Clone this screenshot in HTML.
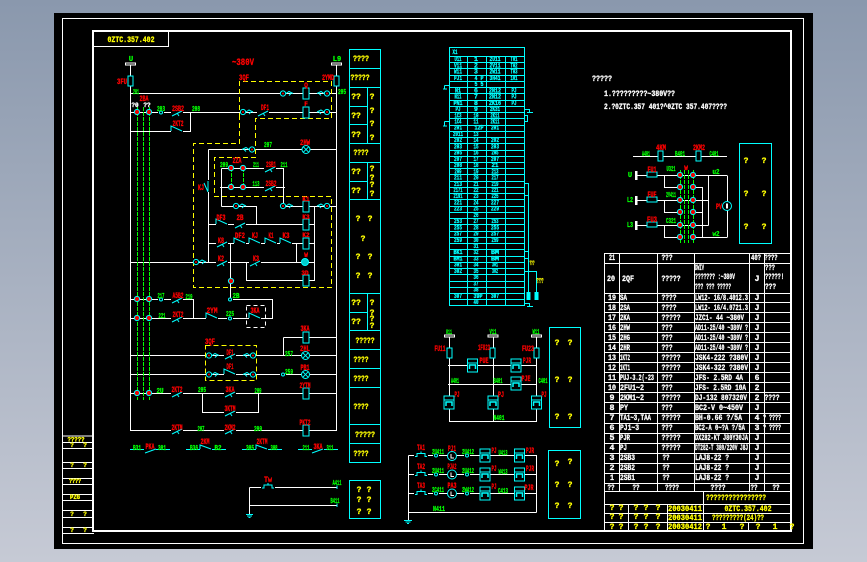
<!DOCTYPE html>
<html><head><meta charset="utf-8"><title>CAD</title>
<style>
html,body{margin:0;padding:0;width:867px;height:562px;overflow:hidden;background:linear-gradient(#8a98ad,#c6cad5)}
svg{position:absolute;left:0;top:0;display:block}
text{font-family:"Liberation Mono",monospace;font-weight:bold;text-anchor:middle;stroke-width:.3px}
.r{fill:#f00;stroke:#f00;font-size:8px}.g{fill:#0f0;stroke:#0f0;font-size:7px}.w{fill:#fff;stroke:#fff;font-size:8px}.y{fill:#ff0;stroke:#ff0;font-size:8px}.c{fill:#0ff;stroke:#0ff;font-size:6.5px}
.s{text-anchor:start}
.L{fill:none;stroke:#fff;stroke-width:1;shape-rendering:crispEdges}
.C{fill:none;stroke:#0ff;stroke-width:1}
.CC{fill:none;stroke:#0ff;stroke-width:1;shape-rendering:crispEdges}
.Y{fill:none;stroke:#ff0;stroke-width:1;stroke-dasharray:5 3;shape-rendering:crispEdges}
.G{fill:none;stroke:#0f0;stroke-width:1;stroke-dasharray:4 1;shape-rendering:crispEdges}
</style></head><body>
<svg width="867" height="562" viewBox="0 0 867 562">
<defs>
<g id="n"><circle r="2.6" fill="#e00" stroke="#0ff"/></g>
<g id="sn"><rect x="-3" y="-1" width="6" height="2" fill="#000"/><circle r="1.5" fill="#000" stroke="#0ff"/></g>
<g id="nc"><rect x="-6" y="-1" width="12" height="2" fill="#000"/><path d="M-5 4L5-1M0 1L2 4" fill="none" stroke="#0ff"/></g>
<g id="no"><rect x="-6" y="-1" width="12" height="2" fill="#000"/><path d="M-6 0V-5L5 0" fill="none" stroke="#0ff"/></g>
<g id="xl"><circle r="2.6" fill="#000" stroke="#0ff"/><circle r="1" fill="#e00"/><path d="M3 0L6-2L10 0M6 2L8 0" fill="none" stroke="#0ff"/></g>
<g id="xr"><circle r="2.6" fill="#000" stroke="#0ff"/><circle r="1" fill="#e00"/><path d="M-3 0L-6-2L-10 0M-6 2L-8 0" fill="none" stroke="#0ff"/></g>
<g id="coil"><rect x="-3" y="-5.5" width="6" height="11" fill="#000" stroke="#0ff"/></g>
<g id="lamp"><circle r="4" fill="#000" stroke="#0ff"/><path d="M-2.8-2.8L2.8 2.8M-2.8 2.8L2.8-2.8" stroke="#0ff"/></g>
<g id="fu"><rect x="-2.5" y="-5" width="5" height="10" fill="#000" stroke="#0ff"/></g>
<g id="tb"><rect x="-5" y="-7" width="10" height="13" fill="#000" stroke="#0ff"/><path d="M-5-3H5" stroke="#0ff"/><path d="M-3 3V-1H3V3" fill="none" stroke="#0ff" stroke-width="1.5"/></g>
<g id="btn"><rect x="-7" y="-1" width="14" height="2" fill="#000"/><path d="M-6 1H-4V-2H4V1H6M0-2V-4" fill="none" stroke="#0ff"/></g>
<g id="mt"><circle r="4.5" fill="#000" stroke="#0ff"/><path d="M-1-2V2H2" fill="none" stroke="#fff"/></g>
<g id="term"><rect x="-5" y="-1" width="10" height="2" fill="#000" stroke="#fff"/></g>
</defs>
<rect x="54" y="13" width="759" height="536" fill="#000"/>

<!-- frame -->
<path class="L" d="M62.5 18.5H803.5V543.5H62.5Z"/>
<path class="L" style="stroke-width:2" d="M93 31H791V531H93Z"/>
<path class="L" d="M93 46.5H168.5V31"/>
<text class="y" x="131" y="42" textLength="47" lengthAdjust="spacingAndGlyphs">0ZTC.357.402</text>
<!-- left strip -->
<path class="L" d="M63 436H93M63 442.5H93M63 448.5H93M63 462.5H93M63 468.5H93M63 478.5H93M63 484.5H93M63 494.5H93M63 500.5H93M63 510.5H93M63 517.5H93M63 527.5H93M63 533.5H94"/>
<text class="y" x="76" y="441.5" textLength="17" lengthAdjust="spacingAndGlyphs" style="font-size:6px">?????</text>
<text class="y" x="72" y="447" style="font-size:6px">?</text><text class="y" x="85" y="447" style="font-size:6px">?</text>
<text class="y" x="72" y="467" style="font-size:6px">?</text><text class="y" x="85" y="467" style="font-size:6px">?</text>
<text class="y" x="75" y="483" textLength="12" lengthAdjust="spacingAndGlyphs" style="font-size:6px">????</text>
<text class="y" x="75" y="499" textLength="10" lengthAdjust="spacingAndGlyphs" style="font-size:6px">PZG</text>
<text class="y" x="72" y="516" style="font-size:6px">?</text><text class="y" x="85" y="516" style="font-size:6px">?</text>
<text class="y" x="72" y="532" style="font-size:6px">?</text><text class="y" x="85" y="532" style="font-size:6px">?</text>

<!-- main schematic wires -->
<path class="L" d="M130.5 64V430.5H336.5V64
M130.5 93.5H336.5M130.5 112.5H336.5M190.5 112.5V131.5H130.5
M208.5 149.5H336.5M208.5 149.5V262M221.5 168.5V206.5M221.5 168.5H283.5V206.5H336.5M220 187.5H285M221.5 206.5H256.5V224
M208.5 224.5H315M314.5 206V280.5H246.5V262
M208.5 243.5H315M230.5 243V299M296.5 243V262M130.5 262.5H315
M130.5 299.5H193.5V318M230.5 299.5H272.5V318.5H130.5
M283.5 337.5H336.5M283.5 337.5V356M130.5 355.5H336.5M130.5 374.5H336.5
M130.5 393.5H336.5M202.5 393.5V412.5H258.5V393.5
M249.5 487.5H337M249.5 505.5H337M249.5 487.5V515"/>
<path class="Y" d="M239.5 118V81.5H331.5V118.5H255.5V157.5H214.5V196.5H331.5V287.5H193.5V143.5H239.5V118"/>
<path class="Y" d="M205.5 345.5H256.5V380.5H205.5Z"/>
<path class="L" style="stroke-dasharray:4 3" d="M246.5 305.5H265.5V327.5H246.5Z"/>
<path class="G" d="M137.5 107V400M143.5 107V400M149.5 107V400M231.5 168V187M243.5 168V187"/>

<use href="#term" x="130.5" y="64"/><use href="#term" x="336.5" y="64"/>
<use href="#fu" x="130.5" y="81"/><use href="#fu" x="336.5" y="81"/>
<use href="#xl" x="283" y="93.5"/><use href="#coil" x="306" y="93.5"/><use href="#xr" x="327" y="93.5"/>
<use href="#n" x="137" y="112"/><use href="#n" x="149" y="112"/><use href="#sn" x="161" y="112.5"/><use href="#nc" x="177" y="112"/><use href="#no" x="177" y="131"/>
<use href="#xl" x="243" y="112"/><use href="#nc" x="263" y="112"/><use href="#coil" x="306" y="112.5"/><use href="#xr" x="327" y="112"/>
<use href="#xr" x="252" y="149.5"/><use href="#lamp" x="306" y="149.5"/>
<rect x="206" y="180" width="5" height="12" fill="#000"/><path class="C" d="M208 181L208 191M204 183L208 192"/>
<use href="#n" x="231" y="168"/><use href="#n" x="243" y="168"/><use href="#nc" x="270" y="168"/>
<use href="#n" x="231" y="187"/><use href="#n" x="243" y="187"/><use href="#nc" x="270" y="187"/>
<use href="#xl" x="236" y="206"/><use href="#xl" x="283" y="206"/><use href="#coil" x="306" y="206.5"/><use href="#xr" x="327" y="206"/>
<use href="#no" x="222" y="224"/><use href="#nc" x="240" y="224"/><use href="#coil" x="306" y="224.5"/>
<use href="#nc" x="222" y="243"/><use href="#no" x="240" y="243"/><use href="#no" x="255" y="243"/><use href="#no" x="271" y="243"/><use href="#no" x="286" y="243"/><use href="#coil" x="306" y="243.5"/>
<use href="#xl" x="196" y="262"/><use href="#nc" x="222" y="262"/><use href="#nc" x="255" y="262"/><circle cx="305" cy="262" r="3.5" fill="#0cc" stroke="#0ff"/>
<use href="#n" x="231" y="281"/><use href="#coil" x="306" y="280.5"/>
<use href="#n" x="137" y="299"/><use href="#n" x="149" y="299"/><use href="#sn" x="161" y="299.5"/><use href="#nc" x="177" y="299"/><use href="#sn" x="230" y="299.5"/>
<use href="#n" x="137" y="318"/><use href="#n" x="149" y="318"/><use href="#nc" x="177" y="318"/><use href="#no" x="212" y="318"/><use href="#sn" x="230" y="318.5"/><use href="#no" x="255" y="318"/>
<use href="#coil" x="306" y="337.5"/>
<use href="#xl" x="209" y="355.5"/><use href="#nc" x="230" y="355"/><use href="#xr" x="253" y="355.5"/><use href="#lamp" x="305.500" y="355.500"/>
<use href="#xl" x="209" y="374.5"/><use href="#no" x="230" y="374"/><use href="#xr" x="253" y="374.5"/><use href="#sn" x="283" y="374.5"/><use href="#lamp" x="305.500" y="374.500"/>
<use href="#n" x="137" y="393"/><use href="#n" x="149" y="393"/><use href="#nc" x="177" y="393"/><use href="#nc" x="230" y="393"/><use href="#coil" x="306" y="393.5"/>
<use href="#nc" x="230" y="412"/>
<use href="#nc" x="177" y="430"/><use href="#nc" x="230" y="430"/><use href="#coil" x="306" y="430.5"/>
<!-- aux row -->
<path class="C" d="M130 449.5H144M156 449.5H170M186 449.5H200M212 449.5H226M242 449.5H256M268 449.5H282M298 449.5H312M324 449.5H338"/>
<path class="C" d="M145 453L156 449M200 449V445L211 449M256 449V445L267 449M312 453L323 449"/>
<use href="#btn" x="268" y="487"/>
<path class="C" d="M246 514.500H253M247 516H252M248.500 517.500H250.500"/>
<path class="C" d="M337 485.500V489M337 503.500V507"/>

<!-- schematic text -->
<text class="g" x="131" y="61">U</text><text class="g" x="337" y="61">L9</text>
<text class="r" x="122" y="84" textLength="10" lengthAdjust="spacingAndGlyphs">3FU</text><text class="r" x="328" y="80" textLength="12" lengthAdjust="spacingAndGlyphs">2YMD</text>
<text x="243" y="65" class="r" style="font-size:10px" textLength="22" lengthAdjust="spacingAndGlyphs">~380V</text>
<text class="r" x="244" y="80" textLength="10" lengthAdjust="spacingAndGlyphs">3QF</text>
<text class="g" x="136" y="94" textLength="6" lengthAdjust="spacingAndGlyphs">201</text><text class="g" x="342" y="94" textLength="8" lengthAdjust="spacingAndGlyphs">205</text>
<text class="r" x="144" y="101" textLength="9" lengthAdjust="spacingAndGlyphs">2BA</text>
<text class="w" x="135" y="107" style="font-size:6px">?0</text><text class="w" x="147" y="107" style="font-size:6px">??</text>
<text class="g" x="161" y="111" textLength="8" lengthAdjust="spacingAndGlyphs">203</text><text class="r" x="178" y="111" textLength="12" lengthAdjust="spacingAndGlyphs">2SB2</text><text class="g" x="196" y="111" textLength="8" lengthAdjust="spacingAndGlyphs">208</text>
<text class="r" x="178" y="126" textLength="11" lengthAdjust="spacingAndGlyphs">2KT2</text>
<text class="r" x="265" y="110" textLength="8" lengthAdjust="spacingAndGlyphs">DF1</text><text class="r" x="306" y="87" style="font-size:6px">Q</text><text class="r" x="306" y="106" style="font-size:6px">F</text>
<text class="g" x="268" y="147" textLength="8" lengthAdjust="spacingAndGlyphs">207</text><text class="r" x="305" y="145" textLength="10" lengthAdjust="spacingAndGlyphs">2HW</text>
<text class="r" x="237" y="163" textLength="9" lengthAdjust="spacingAndGlyphs">2ZA</text><text class="g" x="224" y="167" textLength="8" lengthAdjust="spacingAndGlyphs">209</text><text class="g" x="256" y="167" textLength="6" lengthAdjust="spacingAndGlyphs">211</text><text class="r" x="271" y="167" textLength="10" lengthAdjust="spacingAndGlyphs">2SB1</text><text class="g" x="284" y="167" textLength="7" lengthAdjust="spacingAndGlyphs">211</text>
<text class="g" x="256" y="186" textLength="7" lengthAdjust="spacingAndGlyphs">113</text><text class="r" x="271" y="186" textLength="11" lengthAdjust="spacingAndGlyphs">2SB2</text><text class="r" x="201" y="190" textLength="6" lengthAdjust="spacingAndGlyphs">KJ</text>
<text class="r" x="306" y="201" style="font-size:6px">K1</text><text class="r" x="306" y="219" style="font-size:6px">K3</text><text class="r" x="306" y="237" style="font-size:6px">K2</text><text class="r" x="306" y="257" style="font-size:6px">W</text><text class="r" x="305" y="275" style="font-size:6px">3D</text>
<text class="r" x="221" y="220" textLength="9" lengthAdjust="spacingAndGlyphs">DF3</text><text class="r" x="240" y="220" textLength="7" lengthAdjust="spacingAndGlyphs">2B</text>
<text class="r" x="221" y="243" textLength="6" lengthAdjust="spacingAndGlyphs">K8</text><text class="r" x="240" y="238" textLength="10" lengthAdjust="spacingAndGlyphs">DF2</text><text class="r" x="255" y="238" textLength="6" lengthAdjust="spacingAndGlyphs">KJ</text><text class="r" x="271" y="238" textLength="5" lengthAdjust="spacingAndGlyphs">K1</text><text class="r" x="286" y="238" textLength="7" lengthAdjust="spacingAndGlyphs">K3</text>
<text class="r" x="221" y="261" textLength="6" lengthAdjust="spacingAndGlyphs">K2</text><text class="r" x="256" y="261" textLength="6" lengthAdjust="spacingAndGlyphs">K3</text>
<text class="g" x="161" y="298" textLength="7" lengthAdjust="spacingAndGlyphs">217</text><text class="g" x="189" y="299" textLength="7" lengthAdjust="spacingAndGlyphs">219</text><text class="r" x="178" y="298" textLength="11" lengthAdjust="spacingAndGlyphs">A5B2</text>
<text class="g" x="236" y="298" textLength="7" lengthAdjust="spacingAndGlyphs">2B</text>
<text class="g" x="162" y="318" textLength="7" lengthAdjust="spacingAndGlyphs">221</text><text class="r" x="178" y="317" textLength="11" lengthAdjust="spacingAndGlyphs">2KT2</text><text class="r" x="212" y="313" textLength="11" lengthAdjust="spacingAndGlyphs">2YM</text><text class="g" x="230" y="316" textLength="8" lengthAdjust="spacingAndGlyphs">225</text><text class="r" x="255" y="313" textLength="9" lengthAdjust="spacingAndGlyphs">3KA</text>
<text class="r" x="305" y="331" textLength="9" lengthAdjust="spacingAndGlyphs">3KA</text><text class="r" x="305" y="351" textLength="10" lengthAdjust="spacingAndGlyphs">2HL</text><text class="r" x="305" y="370" textLength="9" lengthAdjust="spacingAndGlyphs">PB1</text>
<text class="r" x="210" y="344" textLength="10" lengthAdjust="spacingAndGlyphs">3QF</text><text class="r" x="230" y="355" textLength="7" lengthAdjust="spacingAndGlyphs">DF1</text><text class="r" x="230" y="369" textLength="7" lengthAdjust="spacingAndGlyphs">DF1</text>
<text class="g" x="289" y="356" textLength="8" lengthAdjust="spacingAndGlyphs">257</text><text class="g" x="289" y="374" textLength="8" lengthAdjust="spacingAndGlyphs">259</text>
<text class="g" x="160" y="393" textLength="7" lengthAdjust="spacingAndGlyphs">2U</text><text class="r" x="177" y="392" textLength="11" lengthAdjust="spacingAndGlyphs">2KT2</text><text class="g" x="202" y="392" textLength="8" lengthAdjust="spacingAndGlyphs">205</text><text class="r" x="230" y="392" textLength="9" lengthAdjust="spacingAndGlyphs">3KA</text><text class="g" x="258" y="393" textLength="7" lengthAdjust="spacingAndGlyphs">209</text><text class="r" x="305" y="388" textLength="11" lengthAdjust="spacingAndGlyphs">2YTM</text>
<text class="r" x="230" y="411" textLength="11" lengthAdjust="spacingAndGlyphs">3KTM</text>
<text class="r" x="177" y="430" textLength="11" lengthAdjust="spacingAndGlyphs">2KTM</text><text class="g" x="201" y="431" textLength="7" lengthAdjust="spacingAndGlyphs">207</text><text class="r" x="230" y="430" textLength="11" lengthAdjust="spacingAndGlyphs">2KM2</text><text class="g" x="258" y="431" textLength="8" lengthAdjust="spacingAndGlyphs">209</text><text class="r" x="305" y="425" textLength="11" lengthAdjust="spacingAndGlyphs">PKT2</text>
<text class="g" x="137" y="450" textLength="8" lengthAdjust="spacingAndGlyphs">B31</text><text class="r" x="150" y="449" textLength="9" lengthAdjust="spacingAndGlyphs">PKA</text><text class="g" x="162" y="450" textLength="8" lengthAdjust="spacingAndGlyphs">301</text>
<text class="g" x="194" y="450" textLength="8" lengthAdjust="spacingAndGlyphs">B36</text><text class="r" x="205" y="444" textLength="9" lengthAdjust="spacingAndGlyphs">2KM</text><text class="g" x="218" y="450" textLength="7" lengthAdjust="spacingAndGlyphs">B2</text>
<text class="g" x="250" y="450" textLength="8" lengthAdjust="spacingAndGlyphs">305</text><text class="r" x="262" y="444" textLength="11" lengthAdjust="spacingAndGlyphs">2KTM</text><text class="g" x="274" y="450" textLength="7" lengthAdjust="spacingAndGlyphs">308</text>
<text class="g" x="306" y="450" textLength="7" lengthAdjust="spacingAndGlyphs">211</text><text class="r" x="318" y="449" textLength="9" lengthAdjust="spacingAndGlyphs">3KA</text><text class="g" x="330" y="450" textLength="7" lengthAdjust="spacingAndGlyphs">311</text>
<text class="r" x="268" y="482" textLength="8" lengthAdjust="spacingAndGlyphs">Tw</text>
<text class="g" x="337" y="485" textLength="9" lengthAdjust="spacingAndGlyphs">A411</text><text class="g" x="335" y="503" textLength="9" lengthAdjust="spacingAndGlyphs">B411</text>

<!-- narrow table -->
<path class="CC" d="M349.500 49.500H380.500V462.500H349.500ZM349.500 68.500H380.500M349.500 87.500H380.500M349.500 106.500H367.500M349.500 124.500H367.500M349.500 143.500H380.500M349.500 162.500H380.500M349.500 181.500H367.500M349.500 199.500H380.500M349.500 293.500H380.500M349.500 312.500H367.500M349.500 330.500H380.500M349.500 349.500H380.500M349.500 368.500H380.500M349.500 387.500H380.500M349.500 424.500H380.500M349.500 443.500H380.500M367.500 87.500V143.500M367.500 162.500V199.500M367.500 293.500V330.500M349.500 480.500H380.500V518.500H349.500Z"/>
<g class="y">
<text class="y" x="361" y="61" textLength="16" lengthAdjust="spacingAndGlyphs">????</text>
<text class="y" x="360" y="80" textLength="19" lengthAdjust="spacingAndGlyphs">?????</text>
<text class="y" x="356" y="99">??</text><text class="y" x="356" y="118">??</text><text class="y" x="356" y="137">??</text>
<text class="y" x="372" y="99">?</text><text class="y" x="372" y="113">?</text><text class="y" x="372" y="126">?</text><text class="y" x="372" y="140">?</text>
<text class="y" x="361" y="155" textLength="15" lengthAdjust="spacingAndGlyphs">????</text>
<text class="y" x="356" y="174">??</text><text class="y" x="356" y="193">??</text>
<text class="y" x="372" y="171">?</text><text class="y" x="372" y="180">?</text><text class="y" x="372" y="187">?</text><text class="y" x="372" y="196">?</text>
<text class="y" x="358" y="221">?</text><text class="y" x="370" y="221">?</text><text class="y" x="363" y="241">?</text><text class="y" x="358" y="259">?</text><text class="y" x="370" y="259">?</text><text class="y" x="358" y="278">?</text><text class="y" x="370" y="278">?</text>
<text class="y" x="356" y="305">??</text><text class="y" x="356" y="324">??</text><text class="y" x="372" y="305">?</text><text class="y" x="372" y="315">?</text><text class="y" x="372" y="321">?</text><text class="y" x="372" y="328">?</text>
<text class="y" x="365" y="343" textLength="19" lengthAdjust="spacingAndGlyphs">?????</text>
<text class="y" x="361" y="362" textLength="15" lengthAdjust="spacingAndGlyphs">????</text>
<text class="y" x="361" y="381" textLength="15" lengthAdjust="spacingAndGlyphs">????</text>
<text class="y" x="361" y="409" textLength="15" lengthAdjust="spacingAndGlyphs">????</text>
<text class="y" x="365" y="437" textLength="20" lengthAdjust="spacingAndGlyphs">?????</text>
<text class="y" x="361" y="456" textLength="15" lengthAdjust="spacingAndGlyphs">????</text>
<text class="y" x="359" y="492">?</text><text class="y" x="369" y="492">?</text><text class="y" x="359" y="502">?</text><text class="y" x="369" y="502">?</text><text class="y" x="359" y="514">?</text><text class="y" x="369" y="514">?</text>
</g>

<!-- terminal table -->
<path class="CC" d="M449.500 47.500H524.500V305.500H449.500ZM467.500 56V305M486.500 56V305M505.500 56V305
M449.500 56.500H524.500M449.500 62.500H524.500M449.500 68.500H524.500M449.500 75.500H524.500M449.500 81.500H524.500M449.500 87.500H524.500M449.500 93.500H524.500M449.500 100.500H524.500M449.500 106.500H524.500M449.500 112.500H524.500M449.500 118.500H524.500M449.500 125.500H524.500M449.500 131.500H524.500M449.500 137.500H524.500M449.500 143.500H524.500M449.500 150.500H524.500M449.500 156.500H524.500M449.500 162.500H524.500M449.500 168.500H524.500M449.500 174.500H524.500M449.500 181.500H524.500M449.500 187.500H524.500M449.500 193.500H524.500M449.500 199.500H524.500M449.500 206.500H524.500M449.500 212.500H524.500M449.500 218.500H524.500M449.500 224.500H524.500M449.500 231.500H524.500M449.500 237.500H524.500M449.500 243.500H524.500M449.500 249.500H524.500M449.500 256.500H524.500M449.500 262.500H524.500M449.500 268.500H524.500M449.500 274.500H524.500M449.500 281.500H524.500M449.500 287.500H524.500M449.500 293.500H524.500M449.500 299.500H524.500
M444.500 85.500H449M444.500 85.500V89M443 89H447M444.500 121.500H449M444.500 121.500V126M443 126H447
M524.500 109.500H529.500V112.500M527 112.500H533M524.500 115.500H527.500V121.500H524.500
M524.500 183.500H528.500V295M524.500 195.500H528.500M524.500 251.500H528.500M524.500 258.500H528.500M524.500 271.500H536.500V295M524.500 303.500H529.500V306.500M527 306.500H533"/>
<path d="M526.500 292h4v8h-4zM534.500 292h4v8h-4z" fill="#0ff"/>
<text class="y" x="532" y="265" style="font-size:6px" textLength="5" lengthAdjust="spacingAndGlyphs">???</text>
<text class="y" x="540" y="283" style="font-size:7px" textLength="7" lengthAdjust="spacingAndGlyphs">????</text>
<text class="c" x="455" y="54" textLength="5" lengthAdjust="spacingAndGlyphs">X1</text>
<g class="c">
<text class="c" x="458" y="61" textLength="7" lengthAdjust="spacingAndGlyphs">U11</text><text class="c" x="476" y="61">1</text><text class="c" x="495" y="61" textLength="11" lengthAdjust="spacingAndGlyphs">2U11</text><text class="c" x="514" y="61" textLength="7" lengthAdjust="spacingAndGlyphs">T01</text>
<text class="c" x="458" y="67.500" textLength="8" lengthAdjust="spacingAndGlyphs">V11</text><text class="c" x="476" y="67.500">2</text><text class="c" x="495" y="67.500" textLength="11" lengthAdjust="spacingAndGlyphs">2V11</text><text class="c" x="514" y="67.500" textLength="7" lengthAdjust="spacingAndGlyphs">T02</text>
<text class="c" x="458" y="73.700" textLength="8" lengthAdjust="spacingAndGlyphs">W11</text><text class="c" x="476" y="73.700">3</text><text class="c" x="495" y="73.700" textLength="11" lengthAdjust="spacingAndGlyphs">2W11</text><text class="c" x="514" y="73.700" textLength="7" lengthAdjust="spacingAndGlyphs">T03</text>
<text class="c" x="458" y="79.900" textLength="8" lengthAdjust="spacingAndGlyphs">PJ1</text><text class="c" x="479" y="79.900" textLength="9" lengthAdjust="spacingAndGlyphs">4 P</text><text class="c" x="495" y="79.900" textLength="11" lengthAdjust="spacingAndGlyphs">3H41</text><text class="c" x="514" y="79.900" textLength="7" lengthAdjust="spacingAndGlyphs">101</text>
<text class="c" x="479" y="86.100" textLength="9" lengthAdjust="spacingAndGlyphs">5 5</text>
<text class="c" x="458" y="92.400" textLength="6" lengthAdjust="spacingAndGlyphs">N1</text><text class="c" x="476" y="92.400">6</text><text class="c" x="495" y="92.400" textLength="12" lengthAdjust="spacingAndGlyphs">2N12</text><text class="c" x="514" y="92.400" textLength="5" lengthAdjust="spacingAndGlyphs">PJ</text>
<text class="c" x="458" y="98.600" textLength="7" lengthAdjust="spacingAndGlyphs">N11</text><text class="c" x="476" y="98.600">7</text><text class="c" x="495" y="98.600" textLength="12" lengthAdjust="spacingAndGlyphs">2N12</text><text class="c" x="514" y="98.600" textLength="5" lengthAdjust="spacingAndGlyphs">PJ</text>
<text class="c" x="458" y="104.800" textLength="9" lengthAdjust="spacingAndGlyphs">PN1</text><text class="c" x="476" y="104.800">8</text><text class="c" x="495" y="104.800" textLength="12" lengthAdjust="spacingAndGlyphs">2K16</text><text class="c" x="514" y="104.800" textLength="5" lengthAdjust="spacingAndGlyphs">PJ</text>
<text class="c" x="458" y="111" textLength="5" lengthAdjust="spacingAndGlyphs">PJ</text><text class="c" x="476" y="111">9</text><text class="c" x="495" y="111" textLength="10" lengthAdjust="spacingAndGlyphs">2K31</text>
<text class="c" x="458" y="117.300" textLength="7" lengthAdjust="spacingAndGlyphs">1C3</text><text class="c" x="476" y="117.300" textLength="5" lengthAdjust="spacingAndGlyphs">10</text><text class="c" x="495" y="117.300" textLength="9" lengthAdjust="spacingAndGlyphs">2K11</text>
<text class="c" x="458" y="123.500" textLength="7" lengthAdjust="spacingAndGlyphs">1C4</text><text class="c" x="476" y="123.500" textLength="5" lengthAdjust="spacingAndGlyphs">11</text><text class="c" x="495" y="123.500" textLength="9" lengthAdjust="spacingAndGlyphs">2K11</text>
<text class="c" x="458" y="129.700" textLength="8" lengthAdjust="spacingAndGlyphs">201</text><text class="c" x="479" y="129.700" textLength="9" lengthAdjust="spacingAndGlyphs">12P</text><text class="c" x="495" y="129.700" textLength="8" lengthAdjust="spacingAndGlyphs">201</text>
<text class="c" x="458" y="136" textLength="10" lengthAdjust="spacingAndGlyphs">2011</text><text class="c" x="476" y="136" textLength="5" lengthAdjust="spacingAndGlyphs">13</text>
<text class="c" x="458" y="142.200" textLength="8" lengthAdjust="spacingAndGlyphs">202</text><text class="c" x="476" y="142.200" textLength="5" lengthAdjust="spacingAndGlyphs">14</text><text class="c" x="495" y="142.200" textLength="8" lengthAdjust="spacingAndGlyphs">202</text>
<text class="c" x="458" y="148.400" textLength="8" lengthAdjust="spacingAndGlyphs">203</text><text class="c" x="476" y="148.400" textLength="5" lengthAdjust="spacingAndGlyphs">15</text><text class="c" x="495" y="148.400" textLength="8" lengthAdjust="spacingAndGlyphs">203</text>
<text class="c" x="458" y="154.600" textLength="8" lengthAdjust="spacingAndGlyphs">205</text><text class="c" x="476" y="154.600" textLength="5" lengthAdjust="spacingAndGlyphs">16</text><text class="c" x="495" y="154.600" textLength="7" lengthAdjust="spacingAndGlyphs">205</text>
<text class="c" x="458" y="160.900" textLength="8" lengthAdjust="spacingAndGlyphs">207</text><text class="c" x="476" y="160.900" textLength="5" lengthAdjust="spacingAndGlyphs">17</text><text class="c" x="495" y="160.900" textLength="8" lengthAdjust="spacingAndGlyphs">207</text>
<text class="c" x="458" y="167.100" textLength="8" lengthAdjust="spacingAndGlyphs">208</text><text class="c" x="476" y="167.100" textLength="5" lengthAdjust="spacingAndGlyphs">18</text><text class="c" x="495" y="167.100" textLength="7" lengthAdjust="spacingAndGlyphs">21</text>
<text class="c" x="458" y="173.300" textLength="7" lengthAdjust="spacingAndGlyphs">209</text><text class="c" x="476" y="173.300" textLength="5" lengthAdjust="spacingAndGlyphs">19</text><text class="c" x="495" y="173.300" textLength="7" lengthAdjust="spacingAndGlyphs">213</text>
<text class="c" x="458" y="179.500" textLength="8" lengthAdjust="spacingAndGlyphs">211</text><text class="c" x="476" y="179.500" textLength="5" lengthAdjust="spacingAndGlyphs">20</text><text class="c" x="495" y="179.500" textLength="7" lengthAdjust="spacingAndGlyphs">217</text>
<text class="c" x="458" y="185.800" textLength="8" lengthAdjust="spacingAndGlyphs">213</text><text class="c" x="476" y="185.800" textLength="5" lengthAdjust="spacingAndGlyphs">21</text><text class="c" x="495" y="185.800" textLength="7" lengthAdjust="spacingAndGlyphs">219</text>
<text class="c" x="458" y="192" textLength="9" lengthAdjust="spacingAndGlyphs">2171</text><text class="c" x="476" y="192" textLength="5" lengthAdjust="spacingAndGlyphs">22</text><text class="c" x="495" y="192" textLength="7" lengthAdjust="spacingAndGlyphs">221</text>
<text class="c" x="458" y="198.200" textLength="9" lengthAdjust="spacingAndGlyphs">2191</text><text class="c" x="476" y="198.200" textLength="5" lengthAdjust="spacingAndGlyphs">23</text><text class="c" x="495" y="198.200" textLength="7" lengthAdjust="spacingAndGlyphs">225</text>
<text class="c" x="458" y="204.400" textLength="8" lengthAdjust="spacingAndGlyphs">221</text><text class="c" x="476" y="204.400" textLength="5" lengthAdjust="spacingAndGlyphs">24</text><text class="c" x="495" y="204.400" textLength="8" lengthAdjust="spacingAndGlyphs">227</text>
<text class="c" x="458" y="210.700" textLength="8" lengthAdjust="spacingAndGlyphs">223</text><text class="c" x="476" y="210.700" textLength="5" lengthAdjust="spacingAndGlyphs">25</text><text class="c" x="495" y="210.700" textLength="8" lengthAdjust="spacingAndGlyphs">229</text>
<text class="c" x="476" y="216.900" textLength="5" lengthAdjust="spacingAndGlyphs">26</text>
<text class="c" x="458" y="223.100" textLength="8" lengthAdjust="spacingAndGlyphs">253</text><text class="c" x="476" y="223.100" textLength="5" lengthAdjust="spacingAndGlyphs">27</text><text class="c" x="495" y="223.100" textLength="7" lengthAdjust="spacingAndGlyphs">253</text>
<text class="c" x="458" y="229.300" textLength="8" lengthAdjust="spacingAndGlyphs">255</text><text class="c" x="476" y="229.300" textLength="5" lengthAdjust="spacingAndGlyphs">28</text><text class="c" x="495" y="229.300" textLength="8" lengthAdjust="spacingAndGlyphs">255</text>
<text class="c" x="458" y="235.600" textLength="8" lengthAdjust="spacingAndGlyphs">257</text><text class="c" x="476" y="235.600" textLength="5" lengthAdjust="spacingAndGlyphs">29</text><text class="c" x="495" y="235.600" textLength="8" lengthAdjust="spacingAndGlyphs">257</text>
<text class="c" x="458" y="241.800" textLength="8" lengthAdjust="spacingAndGlyphs">259</text><text class="c" x="476" y="241.800" textLength="5" lengthAdjust="spacingAndGlyphs">30</text><text class="c" x="495" y="241.800" textLength="7" lengthAdjust="spacingAndGlyphs">259</text>
<text class="c" x="476" y="248" textLength="5" lengthAdjust="spacingAndGlyphs">31</text>
<text class="c" x="458" y="254.200" textLength="9" lengthAdjust="spacingAndGlyphs">BK1</text><text class="c" x="476" y="254.200" textLength="5" lengthAdjust="spacingAndGlyphs">32</text><text class="c" x="495" y="254.200" textLength="8" lengthAdjust="spacingAndGlyphs">BM</text>
<text class="c" x="458" y="260.500" textLength="9" lengthAdjust="spacingAndGlyphs">BM1</text><text class="c" x="476" y="260.500" textLength="5" lengthAdjust="spacingAndGlyphs">33</text><text class="c" x="495" y="260.500" textLength="8" lengthAdjust="spacingAndGlyphs">BM</text>
<text class="c" x="458" y="266.700" textLength="8" lengthAdjust="spacingAndGlyphs">301</text><text class="c" x="476" y="266.700" textLength="5" lengthAdjust="spacingAndGlyphs">34</text><text class="c" x="495" y="266.700" textLength="6" lengthAdjust="spacingAndGlyphs">301</text>
<text class="c" x="458" y="272.900" textLength="8" lengthAdjust="spacingAndGlyphs">302</text><text class="c" x="476" y="272.900" textLength="5" lengthAdjust="spacingAndGlyphs">35</text><text class="c" x="495" y="272.900" textLength="6" lengthAdjust="spacingAndGlyphs">302</text>
<text class="c" x="476" y="279.100" textLength="5" lengthAdjust="spacingAndGlyphs">36</text><text class="c" x="476" y="285.400" textLength="5" lengthAdjust="spacingAndGlyphs">37</text><text class="c" x="476" y="291.600" textLength="5" lengthAdjust="spacingAndGlyphs">38</text>
<text class="c" x="458" y="297.800" textLength="8" lengthAdjust="spacingAndGlyphs">307</text><text class="c" x="478" y="297.800" textLength="9" lengthAdjust="spacingAndGlyphs">39P</text><text class="c" x="495" y="297.800" textLength="8" lengthAdjust="spacingAndGlyphs">307</text>
<text class="c" x="476" y="304" textLength="5" lengthAdjust="spacingAndGlyphs">40</text>
</g>

<!-- lower centre circuits -->
<path class="L" d="M449.500 336V421.500H536.500V336M493.500 336V421.500M448 365.500H536.500M448 384.500H536.500"/>
<use href="#term" x="449.500" y="336"/><use href="#term" x="493" y="336"/><use href="#term" x="536.500" y="336"/>
<use href="#fu" x="449.500" y="353"/><use href="#fu" x="492.500" y="353"/><use href="#fu" x="536.500" y="353"/>
<use href="#tb" x="472.500" y="366"/><use href="#tb" x="516" y="366"/><use href="#tb" x="516" y="384"/>
<use href="#tb" x="449" y="403"/><use href="#tb" x="493" y="403"/><use href="#tb" x="536.500" y="403"/>
<text class="g" x="449" y="334" style="font-size:6.500px" textLength="6" lengthAdjust="spacingAndGlyphs">U11</text><text class="g" x="493" y="334" textLength="7" lengthAdjust="spacingAndGlyphs">V11</text><text class="g" x="536" y="334" textLength="7" lengthAdjust="spacingAndGlyphs">W11</text>
<text class="r" x="440" y="351" textLength="11" lengthAdjust="spacingAndGlyphs">FU11</text><text class="r" x="484" y="350" textLength="12" lengthAdjust="spacingAndGlyphs">1FU23</text><text class="r" x="528" y="351" textLength="12" lengthAdjust="spacingAndGlyphs">FU23</text>
<text class="r" x="484" y="363" textLength="9" lengthAdjust="spacingAndGlyphs">PUE</text><text class="r" x="527" y="363" textLength="8" lengthAdjust="spacingAndGlyphs">PJR</text><text class="r" x="526" y="381" textLength="9" lengthAdjust="spacingAndGlyphs">PJE</text>
<text class="g" x="455" y="383" textLength="8" lengthAdjust="spacingAndGlyphs">A401</text><text class="g" x="498" y="383" textLength="9" lengthAdjust="spacingAndGlyphs">B401</text><text class="g" x="543" y="383" textLength="9" lengthAdjust="spacingAndGlyphs">C401</text>
<text class="r" x="457" y="397" textLength="5" lengthAdjust="spacingAndGlyphs">PJ</text><text class="r" x="501" y="397" textLength="6" lengthAdjust="spacingAndGlyphs">PJ</text><text class="r" x="544" y="397" textLength="5" lengthAdjust="spacingAndGlyphs">PJ</text>
<text class="g" x="499" y="420" textLength="11" lengthAdjust="spacingAndGlyphs">N401</text>
<path class="CC" d="M549.500 327.500H580.500V427.500H549.500Z"/>
<text class="y" x="557" y="345">?</text><text class="y" x="570" y="345">?</text><text class="y" x="557" y="382">?</text><text class="y" x="570" y="382">?</text><text class="y" x="557" y="419">?</text><text class="y" x="570" y="419">?</text>

<path class="L" d="M408.500 455.500V520M408.500 455.500H536.500V512.500M408.500 474.500H536.500M408.500 493.500H536.500M408.500 512.500H536.500"/>
<use href="#btn" x="421" y="455.500"/><use href="#btn" x="421" y="474.500"/><use href="#btn" x="421" y="493.500"/>
<use href="#sn" x="436" y="455.500"/><use href="#sn" x="436" y="474.500"/><use href="#sn" x="436" y="493.500"/>
<use href="#mt" x="452" y="456"/><use href="#mt" x="452" y="474.500"/><use href="#mt" x="452" y="493.500"/>
<use href="#sn" x="467" y="455.500"/><use href="#sn" x="467" y="474.500"/><use href="#sn" x="467" y="493.500"/>
<use href="#tb" x="485" y="456"/><use href="#tb" x="485" y="475"/><use href="#tb" x="485" y="494"/>
<use href="#tb" x="519.500" y="456"/><use href="#tb" x="519.500" y="475"/><use href="#tb" x="519.500" y="494"/>
<path class="C" d="M404 520.500H412M405.500 522H410.500M407 523.500H409"/>
<text class="r" x="421" y="450" textLength="8" lengthAdjust="spacingAndGlyphs">TA1</text><text class="r" x="421" y="469" textLength="8" lengthAdjust="spacingAndGlyphs">TA2</text><text class="r" x="421" y="488" textLength="8" lengthAdjust="spacingAndGlyphs">TA3</text>
<text class="g" x="438" y="454" textLength="12" lengthAdjust="spacingAndGlyphs">2U411</text><text class="g" x="438" y="473" textLength="12" lengthAdjust="spacingAndGlyphs">2U411</text><text class="g" x="438" y="492" textLength="12" lengthAdjust="spacingAndGlyphs">2C411</text>
<text class="r" x="452" y="451" textLength="8" lengthAdjust="spacingAndGlyphs">PJ1</text><text class="r" x="452" y="469" textLength="9" lengthAdjust="spacingAndGlyphs">PJA2</text><text class="r" x="452" y="488" textLength="9" lengthAdjust="spacingAndGlyphs">PA3</text>
<text class="g" x="468" y="454" textLength="12" lengthAdjust="spacingAndGlyphs">2U412</text><text class="g" x="468" y="473" textLength="12" lengthAdjust="spacingAndGlyphs">2U412</text><text class="g" x="468" y="492" textLength="12" lengthAdjust="spacingAndGlyphs">2W412</text>
<text class="r" x="494" y="453" textLength="5" lengthAdjust="spacingAndGlyphs">PJ</text><text class="r" x="494" y="471" textLength="5" lengthAdjust="spacingAndGlyphs">PJ</text><text class="r" x="494" y="489" textLength="5" lengthAdjust="spacingAndGlyphs">PJ</text>
<text class="g" x="503" y="455" textLength="9" lengthAdjust="spacingAndGlyphs">U413</text><text class="g" x="503" y="474" textLength="9" lengthAdjust="spacingAndGlyphs">W413</text><text class="g" x="503" y="493" textLength="10" lengthAdjust="spacingAndGlyphs">C413</text>
<text class="r" x="530" y="453" textLength="8" lengthAdjust="spacingAndGlyphs">PJR</text><text class="r" x="530" y="471" textLength="8" lengthAdjust="spacingAndGlyphs">PJR</text><text class="r" x="529" y="490" textLength="9" lengthAdjust="spacingAndGlyphs">PJR</text>
<text class="g" x="439" y="511" textLength="12" lengthAdjust="spacingAndGlyphs">N411</text>
<path class="CC" d="M548.500 450.500H580.500V518.500H548.500Z"/>
<text class="y" x="557" y="466">?</text><text class="y" x="570" y="464">?</text><text class="y" x="557" y="487">?</text><text class="y" x="570" y="487">?</text><text class="y" x="557" y="508">?</text><text class="y" x="570" y="508">?</text>

<!-- notes -->
<text class="w s" x="592" y="81" textLength="20" lengthAdjust="spacingAndGlyphs">?????</text>
<text class="w s" x="604" y="96" textLength="71" lengthAdjust="spacingAndGlyphs">1.?????????~380V??</text>
<text class="w s" x="604" y="109" textLength="123" lengthAdjust="spacingAndGlyphs">2.?0ZTC.357 401?^0ZTC 357.407????</text>

<!-- three phase -->
<path class="L" d="M633 156.500H727M635 175.500H727M635 200.500H708.500M635 225.500H708.500M664.500 175.500V187.500H680M664.500 200.500V212.500H680M664.500 225.500V237.500H680M708.500 175.500V225.500M693 187.500H702.500V237.500M693 212.500H702.500M693 237.500H727M727.500 175.500V237.500"/>
<path class="G" d="M680.500 170V243M684.500 170V243M688.500 170V243M693.500 170V243"/>
<path d="M635 171h2.500v9h-2.500zM635 196h2.500v9h-2.500zM635 221h2.500v9h-2.500z" fill="#fff"/>
<rect x="658" y="151" width="5" height="10" fill="#000" stroke="#0ff"/><rect x="696" y="151" width="5" height="10" fill="#000" stroke="#0ff"/>
<rect x="647" y="172" width="10" height="5" fill="#000" stroke="#0ff"/><rect x="647" y="197" width="10" height="5" fill="#000" stroke="#0ff"/><rect x="647" y="222" width="10" height="5" fill="#000" stroke="#0ff"/>
<use href="#n" x="680" y="175"/><use href="#n" x="680" y="187"/><use href="#n" x="680" y="200"/><use href="#n" x="680" y="212"/><use href="#n" x="680" y="225"/><use href="#n" x="680" y="237"/>
<use href="#n" x="693" y="175"/><use href="#n" x="693" y="187"/><use href="#n" x="693" y="200"/><use href="#n" x="693" y="212"/><use href="#n" x="693" y="225"/><use href="#n" x="693" y="237"/>
<circle cx="727" cy="206" r="4.500" fill="#000" stroke="#0ff"/><rect x="726" y="203.500" width="2" height="5" fill="#fff"/>
<text class="r" x="661" y="150" textLength="10" lengthAdjust="spacingAndGlyphs">4KM</text><text class="r" x="699" y="150" textLength="12" lengthAdjust="spacingAndGlyphs">2KM2</text>
<text class="g" x="646" y="156" textLength="8" lengthAdjust="spacingAndGlyphs">A401</text><text class="g" x="680" y="156" textLength="10" lengthAdjust="spacingAndGlyphs">B401</text><text class="g" x="714" y="156" textLength="9" lengthAdjust="spacingAndGlyphs">C401</text>
<text class="g" x="630" y="177" textLength="4" lengthAdjust="spacingAndGlyphs">U</text><text class="g" x="630" y="202" textLength="6" lengthAdjust="spacingAndGlyphs">L2</text><text class="g" x="630" y="227" textLength="6" lengthAdjust="spacingAndGlyphs">L3</text>
<text class="r" x="652" y="172" textLength="9" lengthAdjust="spacingAndGlyphs">FU1</text><text class="r" x="652" y="197" textLength="9" lengthAdjust="spacingAndGlyphs">FUF</text><text class="r" x="652" y="222" textLength="10" lengthAdjust="spacingAndGlyphs">FU3</text>
<text class="g" x="671" y="171" textLength="9" lengthAdjust="spacingAndGlyphs">U321</text><text class="g" x="671" y="197" textLength="10" lengthAdjust="spacingAndGlyphs">2V411</text><text class="g" x="671" y="223" textLength="10" lengthAdjust="spacingAndGlyphs">C321</text>
<text class="r" x="686" y="170" style="font-size:6px">W</text><text class="g" x="716" y="174" textLength="7" lengthAdjust="spacingAndGlyphs">u2</text><text class="g" x="716" y="236" textLength="7" lengthAdjust="spacingAndGlyphs">w2</text><text class="r" x="719" y="209" textLength="6" lengthAdjust="spacingAndGlyphs">PV</text>
<path class="CC" d="M739.500 143.500H771.500V243.500H739.500Z"/>
<text class="y" x="746" y="163">?</text><text class="y" x="764" y="163">?</text><text class="y" x="746" y="196">?</text><text class="y" x="764" y="196">?</text><text class="y" x="746" y="229">?</text><text class="y" x="764" y="229">?</text>

<!-- BOM -->
<path class="L" d="M604.500 253.500H790M604.500 263.500H790M604.500 293.500H790M604.500 302.500H790M604.500 312.500H790M604.500 322.500H790M604.500 332.500H790M604.500 342.500H790M604.500 352.500H790M604.500 362.500H790M604.500 372.500H790M604.500 382.500H790M604.500 392.500H790M604.500 402.500H790M604.500 413.500H790M604.500 423.500H790M604.500 433.500H790M604.500 443.500H790M604.500 453.500H790M604.500 463.500H790M604.500 473.500H790M604.500 483.500H790M604.500 491.500H790M604.500 504.500H790M604.500 513.500H790M604.500 522.500H790
M604.500 253V531M619.500 253V492M657.500 253V492M694.500 253V492M749.500 253V492M764.500 253V492
M703.500 492V531M628.500 504V531M667.500 504V531M748.500 522V531"/>
<g>
<text class="w" x="612" y="260" textLength="6" lengthAdjust="spacingAndGlyphs">21</text><text class="w" x="667" y="260" textLength="11" lengthAdjust="spacingAndGlyphs">???</text><text class="w" x="756" y="260" textLength="10" lengthAdjust="spacingAndGlyphs">40?</text><text class="w" x="771" y="260" textLength="13" lengthAdjust="spacingAndGlyphs">????</text>
<text class="w" x="611" y="281" textLength="8" lengthAdjust="spacingAndGlyphs">20</text><text class="w" x="628" y="281" textLength="12" lengthAdjust="spacingAndGlyphs">2QF</text><text class="w" x="671" y="281" textLength="19" lengthAdjust="spacingAndGlyphs">?????</text>
<text class="w s" x="695" y="270" textLength="9" lengthAdjust="spacingAndGlyphs">DWIV</text><text class="w s" x="695" y="279" textLength="40" lengthAdjust="spacingAndGlyphs">??????? :~380V</text><text class="w s" x="695" y="289" textLength="36" lengthAdjust="spacingAndGlyphs">??? ??? ?????</text>
<text class="w" x="757" y="281">J</text><text class="w s" x="765" y="270" textLength="10" lengthAdjust="spacingAndGlyphs">???</text><text class="w s" x="765" y="279" textLength="19" lengthAdjust="spacingAndGlyphs">?????!</text><text class="w s" x="765" y="289" textLength="11" lengthAdjust="spacingAndGlyphs">???</text>

<text class="w" x="612" y="300" textLength="8" lengthAdjust="spacingAndGlyphs">19</text><text class="w s" x="620" y="300" textLength="7" lengthAdjust="spacingAndGlyphs">SA</text><text class="w" x="669" y="300" textLength="15" lengthAdjust="spacingAndGlyphs">????</text><text class="w s" x="695" y="300" textLength="53" lengthAdjust="spacingAndGlyphs">LW12- 16/8.4012.3</text><text class="w" x="757" y="300">J</text>
<text class="w" x="612" y="310" textLength="8" lengthAdjust="spacingAndGlyphs">18</text><text class="w s" x="620" y="310" textLength="10" lengthAdjust="spacingAndGlyphs">2SA</text><text class="w" x="669" y="310" textLength="15" lengthAdjust="spacingAndGlyphs">????</text><text class="w s" x="695" y="310" textLength="53" lengthAdjust="spacingAndGlyphs">LW12- 16/4.0721.3</text><text class="w" x="757" y="310">J</text>
<text class="w" x="612" y="320" textLength="8" lengthAdjust="spacingAndGlyphs">17</text><text class="w s" x="620" y="320" textLength="10" lengthAdjust="spacingAndGlyphs">2KA</text><text class="w" x="671" y="320" textLength="19" lengthAdjust="spacingAndGlyphs">?????</text><text class="w s" x="695" y="320" textLength="49" lengthAdjust="spacingAndGlyphs">JZC1- 44 ~380V</text><text class="w" x="757" y="320">J</text>
<text class="w" x="612" y="330" textLength="8" lengthAdjust="spacingAndGlyphs">16</text><text class="w s" x="620" y="330" textLength="10" lengthAdjust="spacingAndGlyphs">2HW</text><text class="w" x="667" y="330" textLength="11" lengthAdjust="spacingAndGlyphs">???</text><text class="w s" x="695" y="330" textLength="53" lengthAdjust="spacingAndGlyphs">AD11-25/40 ~380V ?</text><text class="w" x="757" y="330">J</text>
<text class="w" x="612" y="340" textLength="8" lengthAdjust="spacingAndGlyphs">15</text><text class="w s" x="620" y="340" textLength="10" lengthAdjust="spacingAndGlyphs">2HG</text><text class="w" x="667" y="340" textLength="11" lengthAdjust="spacingAndGlyphs">???</text><text class="w s" x="695" y="340" textLength="53" lengthAdjust="spacingAndGlyphs">AD11-25/40 ~380V ?</text><text class="w" x="757" y="340">J</text>
<text class="w" x="612" y="350" textLength="8" lengthAdjust="spacingAndGlyphs">14</text><text class="w s" x="620" y="350" textLength="10" lengthAdjust="spacingAndGlyphs">2HR</text><text class="w" x="667" y="350" textLength="11" lengthAdjust="spacingAndGlyphs">???</text><text class="w s" x="695" y="350" textLength="53" lengthAdjust="spacingAndGlyphs">AD11-25/40 ~380V ?</text><text class="w" x="757" y="350">J</text>
<text class="w" x="612" y="360" textLength="8" lengthAdjust="spacingAndGlyphs">13</text><text class="w s" x="620" y="360" textLength="10" lengthAdjust="spacingAndGlyphs">1KT2</text><text class="w" x="671" y="360" textLength="19" lengthAdjust="spacingAndGlyphs">?????</text><text class="w s" x="695" y="360" textLength="53" lengthAdjust="spacingAndGlyphs">JSK4-222 ?380V</text><text class="w" x="757" y="360">J</text>
<text class="w" x="612" y="370" textLength="8" lengthAdjust="spacingAndGlyphs">12</text><text class="w s" x="620" y="370" textLength="10" lengthAdjust="spacingAndGlyphs">1KT1</text><text class="w" x="671" y="370" textLength="19" lengthAdjust="spacingAndGlyphs">?????</text><text class="w s" x="695" y="370" textLength="53" lengthAdjust="spacingAndGlyphs">JSK4-322 ?380V</text><text class="w" x="757" y="370">J</text>
<text class="w" x="612" y="380" textLength="8" lengthAdjust="spacingAndGlyphs">11</text><text class="w s" x="620" y="380" textLength="34" lengthAdjust="spacingAndGlyphs">PUJ-3.2(-23</text><text class="w" x="667" y="380" textLength="11" lengthAdjust="spacingAndGlyphs">???</text><text class="w s" x="695" y="380" textLength="48" lengthAdjust="spacingAndGlyphs">JFS- 2.5RD  4A</text><text class="w" x="757" y="380">6</text>
<text class="w" x="612" y="390" textLength="8" lengthAdjust="spacingAndGlyphs">10</text><text class="w s" x="620" y="390" textLength="24" lengthAdjust="spacingAndGlyphs">2FU1~2</text><text class="w" x="667" y="390" textLength="11" lengthAdjust="spacingAndGlyphs">???</text><text class="w s" x="695" y="390" textLength="51" lengthAdjust="spacingAndGlyphs">JFS- 2.5RD  10A</text><text class="w" x="757" y="390">2</text>

<text class="w" x="612" y="400" textLength="5" lengthAdjust="spacingAndGlyphs">9</text><text class="w s" x="620" y="400" textLength="24" lengthAdjust="spacingAndGlyphs">2KM1~2</text><text class="w" x="671" y="400" textLength="19" lengthAdjust="spacingAndGlyphs">?????</text><text class="w s" x="695" y="400" textLength="52" lengthAdjust="spacingAndGlyphs">DJ-132 807320V</text><text class="w" x="757" y="400">2</text><text class="w" x="772" y="400" textLength="15" lengthAdjust="spacingAndGlyphs">????</text>
<text class="w" x="612" y="410" textLength="5" lengthAdjust="spacingAndGlyphs">8</text><text class="w s" x="620" y="410" textLength="8" lengthAdjust="spacingAndGlyphs">PY</text><text class="w" x="667" y="410" textLength="11" lengthAdjust="spacingAndGlyphs">???</text><text class="w s" x="695" y="410" textLength="48" lengthAdjust="spacingAndGlyphs">BC2-V 0~450V</text><text class="w" x="757" y="410">J</text>
<text class="w" x="612" y="420" textLength="5" lengthAdjust="spacingAndGlyphs">7</text><text class="w s" x="620" y="420" textLength="31" lengthAdjust="spacingAndGlyphs">TA1~3,TAA</text><text class="w" x="671" y="420" textLength="19" lengthAdjust="spacingAndGlyphs">?????</text><text class="w s" x="695" y="420" textLength="47" lengthAdjust="spacingAndGlyphs">BH-0.66 ?/5A</text><text class="w" x="757" y="420">4</text><text class="w" x="772" y="420" textLength="18" lengthAdjust="spacingAndGlyphs">? ????</text>
<text class="w" x="612" y="430" textLength="5" lengthAdjust="spacingAndGlyphs">6</text><text class="w s" x="620" y="430" textLength="19" lengthAdjust="spacingAndGlyphs">PJ1~3</text><text class="w" x="667" y="430" textLength="11" lengthAdjust="spacingAndGlyphs">???</text><text class="w s" x="695" y="430" textLength="50" lengthAdjust="spacingAndGlyphs">BC2-A 0~?A ?/5A</text><text class="w" x="757" y="430">3</text><text class="w" x="772" y="430" textLength="18" lengthAdjust="spacingAndGlyphs">? ????</text>
<text class="w" x="612" y="440" textLength="5" lengthAdjust="spacingAndGlyphs">5</text><text class="w s" x="620" y="440" textLength="10" lengthAdjust="spacingAndGlyphs">PJR</text><text class="w" x="671" y="440" textLength="19" lengthAdjust="spacingAndGlyphs">?????</text><text class="w s" x="695" y="440" textLength="53" lengthAdjust="spacingAndGlyphs">DX282-KT J80Y30JA</text><text class="w" x="757" y="440">J</text>
<text class="w" x="612" y="450" textLength="5" lengthAdjust="spacingAndGlyphs">4</text><text class="w s" x="620" y="450" textLength="7" lengthAdjust="spacingAndGlyphs">PJ</text><text class="w" x="671" y="450" textLength="19" lengthAdjust="spacingAndGlyphs">?????</text><text class="w s" x="695" y="450" textLength="53" lengthAdjust="spacingAndGlyphs">DT282-T 380/220V J8J</text><text class="w" x="757" y="450">J</text>
<text class="w" x="612" y="460" textLength="5" lengthAdjust="spacingAndGlyphs">3</text><text class="w s" x="620" y="460" textLength="15" lengthAdjust="spacingAndGlyphs">2SB3</text><text class="w" x="666" y="460" textLength="7" lengthAdjust="spacingAndGlyphs">??</text><text class="w s" x="695" y="460" textLength="34" lengthAdjust="spacingAndGlyphs">LAJ8-22 ?</text><text class="w" x="757" y="460">J</text>
<text class="w" x="612" y="470" textLength="5" lengthAdjust="spacingAndGlyphs">2</text><text class="w s" x="620" y="470" textLength="15" lengthAdjust="spacingAndGlyphs">2SB2</text><text class="w" x="666" y="470" textLength="7" lengthAdjust="spacingAndGlyphs">??</text><text class="w s" x="695" y="470" textLength="34" lengthAdjust="spacingAndGlyphs">LAJ8-22 ?</text><text class="w" x="757" y="470">J</text>
<text class="w" x="612" y="480" textLength="4" lengthAdjust="spacingAndGlyphs">1</text><text class="w s" x="620" y="480" textLength="15" lengthAdjust="spacingAndGlyphs">2SB1</text><text class="w" x="666" y="480" textLength="7" lengthAdjust="spacingAndGlyphs">??</text><text class="w s" x="695" y="480" textLength="34" lengthAdjust="spacingAndGlyphs">LAJ8-22 ?</text><text class="w" x="757" y="480">J</text>
<text class="w" x="611" y="490" textLength="7" lengthAdjust="spacingAndGlyphs">??</text><text class="w" x="636" y="490" textLength="7" lengthAdjust="spacingAndGlyphs">??</text><text class="w" x="672" y="490" textLength="14" lengthAdjust="spacingAndGlyphs">????</text><text class="w" x="718" y="490" textLength="15" lengthAdjust="spacingAndGlyphs">????</text><text class="w" x="754" y="490" textLength="7" lengthAdjust="spacingAndGlyphs">??</text><text class="w" x="776" y="490" textLength="7" lengthAdjust="spacingAndGlyphs">??</text>
</g>
<text class="y" x="736" y="500" textLength="60" lengthAdjust="spacingAndGlyphs">????????????????</text>
<text class="y" x="748" y="511" textLength="47" lengthAdjust="spacingAndGlyphs">0ZTC.357.402</text>
<text class="y" x="738" y="520" textLength="52" lengthAdjust="spacingAndGlyphs">?????????(24)??</text>
<text class="y" x="612" y="510">?</text><text class="y" x="621" y="510">?</text><text class="y" x="636" y="510">?</text><text class="y" x="646" y="510">?</text><text class="y" x="658" y="510">?</text>
<text class="y" x="685" y="511" textLength="34" lengthAdjust="spacingAndGlyphs">20030411</text>
<text class="y" x="612" y="519">?</text><text class="y" x="621" y="519">?</text><text class="y" x="636" y="519">?</text><text class="y" x="646" y="519">?</text><text class="y" x="658" y="519">?</text>
<text class="y" x="685" y="520" textLength="34" lengthAdjust="spacingAndGlyphs">20030411</text>
<text class="y" x="612" y="529">?</text><text class="y" x="621" y="529">?</text><text class="y" x="636" y="529">?</text><text class="y" x="646" y="529">?</text><text class="y" x="658" y="529">?</text>
<text class="y" x="685" y="529" textLength="34" lengthAdjust="spacingAndGlyphs">20030412</text>
<text class="y" x="708" y="529">?</text><text class="y" x="724" y="529">1</text><text class="y" x="742" y="529">?</text><text class="y" x="758" y="529">?</text><text class="y" x="775" y="529">1</text><text class="y" x="792" y="529">?</text>
</svg>
</body></html>
